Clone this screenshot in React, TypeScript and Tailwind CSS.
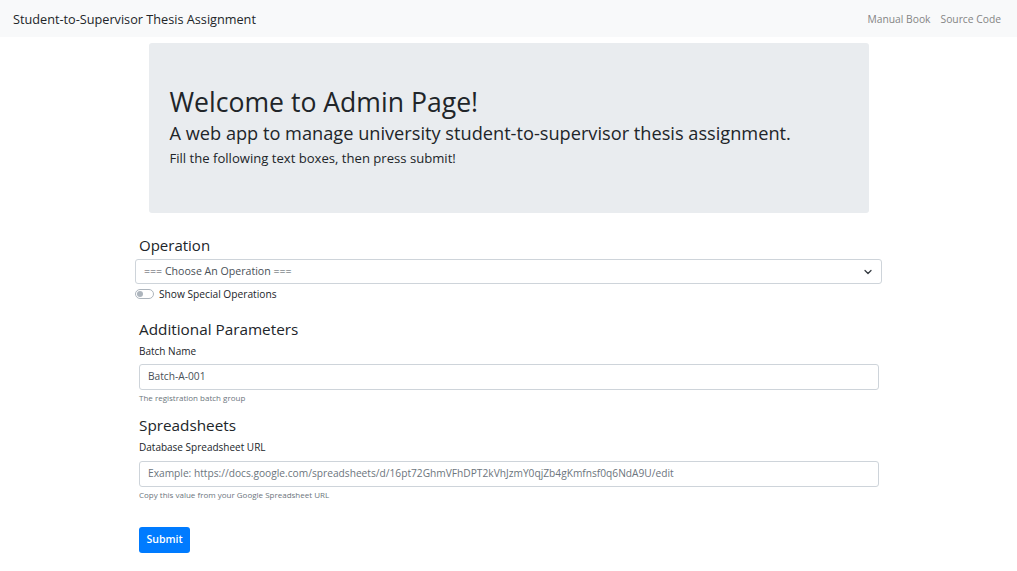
import React from "react";

export default function App() {
  const font = { fontFamily: '"Open Sans", "Noto Sans", sans-serif' };
  return (
    <div className="min-h-[571px] bg-white text-[#212529]" style={font}>
      <nav className="h-[37px] bg-[#f8f9fa] flex items-center justify-between pl-[13px] pr-[16px]">
        <span className="text-[12.7px] text-[#212529] pt-[2px]">Student-to-Supervisor Thesis Assignment</span>
        <div className="flex gap-[10px] text-[10.3px] text-[#858585] pt-[2px]">
          <span>Manual Book</span>
          <span>Source Code</span>
        </div>
      </nav>
      <div className="w-[720px] mx-auto mt-[6px] h-[170px] bg-[#e9ecef] rounded-[3px] pl-[21px] pt-[44px]">
        <h1 className="text-[26.6px] leading-[30px] font-medium">Welcome to Admin Page!</h1>
        <h2 className="text-[18.2px] leading-[24px] mt-[4px] font-medium">A web app to manage university student-to-supervisor thesis assignment.</h2>
        <p className="text-[13.1px] leading-[16px] mt-[5px] font-medium">Fill the following text boxes, then press submit!</p>
      </div>
      <div className="w-[740px] ml-[139px] mt-[22px]">
        <h3 className="text-[15px] leading-[20px] font-medium">Operation</h3>
        <div className="-ml-[4px] w-[747px] h-[25px] mt-[4px] border border-[#ced4da] rounded-[3px] flex items-center justify-between pl-[8px] pr-[8px]">
          <span className="text-[10.6px] text-[#495057]">=== Choose An Operation ===</span>
          <svg width="10" height="8" viewBox="0 0 16 16"><path d="M2 5l6 6 6-6" fill="none" stroke="#343a40" strokeWidth="2.5" strokeLinecap="round" strokeLinejoin="round"/></svg>
        </div>
        <div className="-ml-[4px] flex items-center mt-[3px] gap-[5px]">
          <div className="w-[19px] h-[10px] rounded-full border border-[#adb5bd] bg-white relative">
            <div className="absolute left-[1px] top-[1px] w-[6px] h-[6px] rounded-full bg-[#adb5bd]" />
          </div>
          <span className="text-[10.2px] leading-[14px]">Show Special Operations</span>
        </div>
        <h3 className="text-[15.3px] leading-[20px] mt-[18px] font-medium">Additional Parameters</h3>
        <div className="text-[10px] leading-[14px] mt-[5px]">Batch Name</div>
        <div className="w-[740px] h-[26px] mt-[6px] border border-[#ced4da] rounded-[3px] flex items-center pl-[8px] text-[10.2px] text-[#495057]">Batch-A-001</div>
        <div className="text-[8px] leading-[10px] text-[#6c757d] mt-[3px]">The registration batch group</div>
        <h3 className="text-[15.3px] leading-[20px] mt-[12px] font-medium">Spreadsheets</h3>
        <div className="text-[10px] leading-[14px] mt-[5px]">Database Spreadsheet URL</div>
        <div className="w-[740px] h-[26px] mt-[7px] border border-[#ced4da] rounded-[3px] flex items-center pl-[8px] text-[10.2px] text-[#6c757d]">Example: https://docs.google.com/spreadsheets/d/16pt72GhmVFhDPT2kVhJzmY0qjZb4gKmfnsf0q6NdA9U/edit</div>
        <div className="text-[8px] leading-[10px] text-[#6c757d] mt-[3px]">Copy this value from your Google Spreadsheet URL</div>
        <button className="mt-[27px] w-[51px] h-[26px] bg-[#007bff] text-white text-[10.5px] font-semibold rounded-[3px]">Submit</button>
      </div>
    </div>
  );
}
